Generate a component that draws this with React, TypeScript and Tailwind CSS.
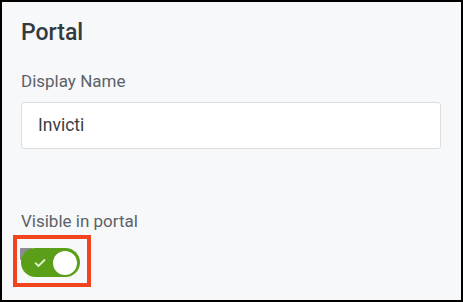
import React from "react";

export default function App() {
  return (
    <div
      className="w-[463px] h-[302px] border-2 border-black bg-[#f7f8fa] px-[19px] pt-[16px] box-border"
      style={{ fontFamily: "Roboto, 'Noto Sans', sans-serif" }}
    >
      <h1 className="text-[23px] leading-[30px] font-medium text-[#333a40]">Portal</h1>
      <div className="mt-[23px] text-[17px] leading-[20px] text-[#5c6168]">Display Name</div>
      <div className="mt-[11px] w-[420px] h-[47px] bg-white border border-[#dcdde0] rounded-[3px] flex items-center pl-[16px] text-[17.5px] text-[#3a3f45]">
        Invicti
      </div>
      <div className="mt-[62px] text-[17px] leading-[20px] text-[#5c6168]">Visible in portal</div>
      <div className="mt-[4px] -ml-[8px] w-[78px] h-[52px] border-[4px] border-[#f2441d] flex items-start pt-[9px] pl-[4px]">
        <div className="relative w-[59px] h-[29px]">
          <div className="absolute left-[-1px] top-0 w-[12px] h-[12px] bg-[#8a8c8e] rounded-[1px]" />
          <div className="absolute inset-0 rounded-full bg-[#5a9f17]">
            <svg className="absolute left-[13px] top-[9.5px]" width="12" height="10" viewBox="0 0 12 10">
              <path d="M1.5 5.2 L4.5 8 L10.5 2" fill="none" stroke="#dfeecf" strokeWidth="1.8" strokeLinecap="round" strokeLinejoin="round" />
            </svg>
            <div className="absolute right-[3px] top-[2.5px] w-[24px] h-[24px] rounded-full bg-white" />
          </div>
        </div>
      </div>
    </div>
  );
}
